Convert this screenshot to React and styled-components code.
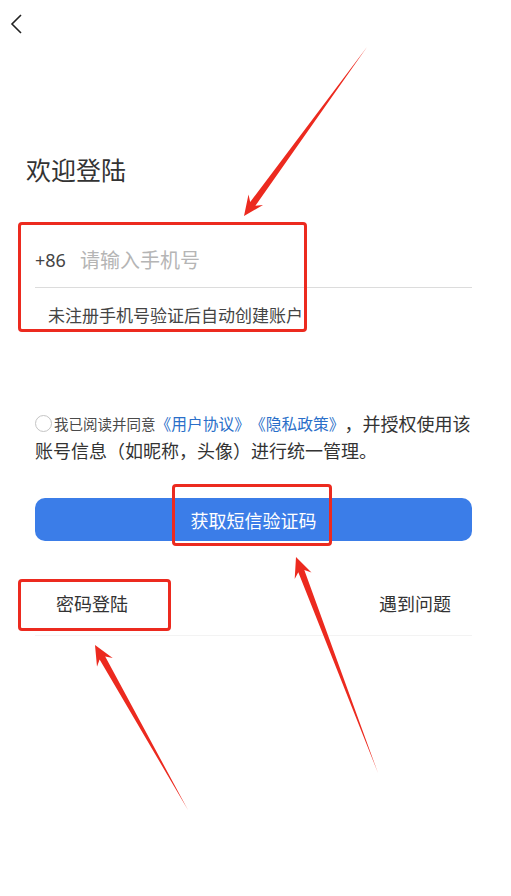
import React from 'react';
import styled, { createGlobalStyle } from 'styled-components';

const GlobalStyle = createGlobalStyle`
    html, body {
        margin: 0;
        padding: 0;
        background: #fff;
    }
    body {
        font-family: "Noto Sans CJK SC", "Noto Sans", sans-serif;
        color: #333;
        text-spacing-trim: space-all;
    }
`

const red = '#ec2a1f'

export const Page = styled.div`
    position: relative;
    width: 511px;
    height: 896px;
    overflow: hidden;
    background: #fff;
`

export const Header = styled.header`
    height: 48px;
    display: flex;
    align-items: center;
    padding-left: 8px;

    svg {
        display: block;
    }
`

export const Title = styled.h1`
    margin: 109px 0 0 26px;
    font-size: 25px;
    line-height: 25px;
    font-weight: 400;
    color: #333;
`

export const Content = styled.div`
    padding: 0 39px 0 35px;
`

export const PhoneRow = styled.div`
    margin-top: 50px;
    height: 55px;
    display: flex;
    align-items: center;
    gap: 14px;
    border-bottom: 1px solid #dcdcdc;
`

export const Prefix = styled.span`
    font-family: "Noto Sans", "Noto Sans CJK SC", sans-serif;
    font-size: 18px;
    color: #444;
`

export const Input = styled.span`
    font-size: 20px;
    color: #b5b5b5;
`

export const Hint = styled.p`
    margin: 17px 0 0 13px;
    font-size: 17px;
    line-height: 20px;
    color: #444;
`

export const Agreement = styled.div`
    margin-top: 85px;
    font-size: 18px;
    line-height: 27px;
    color: #333;
    white-space: nowrap;
`

export const Line = styled.div`
    display: flex;
    align-items: center;
`

export const Radio = styled.span`
    width: 15px;
    height: 15px;
    border: 1px solid #c4c4c4;
    border-radius: 50%;
    margin-right: 2px;
    flex: none;
`

export const Small = styled.span`
    font-size: 14.5px;
    color: #4a4a4a;
`

export const Link = styled.a`
    font-size: 15.75px;
    color: #2a6fc9;
    text-decoration: none;
`

export const Button = styled.button`
    display: block;
    width: 100%;
    height: 43px;
    margin-top: 34px;
    border: none;
    border-radius: 10px;
    background: #3b7de8;
    color: #fff;
    font-family: inherit;
    font-size: 18px;
    padding: 0;
`

export const BottomRow = styled.div`
    margin-top: 29px;
    height: 65px;
    display: flex;
    align-items: center;
    justify-content: space-between;
    padding: 0 21px;
    border-bottom: 1px solid #f3f3f3;
    font-size: 18px;
    color: #333;
`

export const Overlay = styled.div`
    position: absolute;
    inset: 0;
    pointer-events: none;

    svg {
        position: absolute;
        inset: 0;
    }
`

export const Mark = styled.div`
    position: absolute;
    left: ${p => p.$x}px;
    top: ${p => p.$y}px;
    width: ${p => p.$w}px;
    height: ${p => p.$h}px;
    box-sizing: border-box;
    border: 3px solid ${red};
    border-radius: 4px;
`

const arrowPoints = ([tx, ty], [px, py]) => {
    const len = Math.hypot(px - tx, py - ty)
    const dx = (px - tx) / len
    const dy = (py - ty) / len
    const nx = -dy
    const ny = dx
    const L = 20, notch = 5, hw = 9, sw = 3.2
    const bx = px - dx * L, by = py - dy * L
    const jx = px - dx * (L - notch), jy = py - dy * (L - notch)
    return [
        [tx, ty],
        [jx + nx * sw, jy + ny * sw],
        [bx + nx * hw, by + ny * hw],
        [px, py],
        [bx - nx * hw, by - ny * hw],
        [jx - nx * sw, jy - ny * sw],
    ].map(p => p.map(v => v.toFixed(1)).join(',')).join(' ')
}

const arrows = [
    [[367, 47], [244, 216]],
    [[378, 773], [296, 557]],
    [[188, 810], [95, 645]],
]

const App = () => (
    <>
        <GlobalStyle/>
        <Page>
            <Header>
                <svg width="20" height="24" viewBox="0 0 20 24">
                    <polyline points="13,3 4,12 13,21" fill="none" stroke="#222" strokeWidth="1.6"/>
                </svg>
            </Header>
            <Title>欢迎登陆</Title>
            <Content>
                <PhoneRow>
                    <Prefix>+86</Prefix>
                    <Input>请输入手机号</Input>
                </PhoneRow>
                <Hint>未注册手机号验证后自动创建账户</Hint>
                <Agreement>
                    <Line>
                        <Radio/>
                        <Small>我已阅读并同意</Small>
                        <Link>《用户协议》《隐私政策》</Link>
                        <span>，并授权使用该</span>
                    </Line>
                    <Line>账号信息（如昵称，头像）进行统一管理。</Line>
                </Agreement>
                <Button>获取短信验证码</Button>
                <BottomRow>
                    <span>密码登陆</span>
                    <span>遇到问题</span>
                </BottomRow>
            </Content>
            <Overlay>
                <Mark $x={18} $y={222} $w={289} $h={110}/>
                <Mark $x={172} $y={484} $w={160} $h={62}/>
                <Mark $x={18} $y={579} $w={153} $h={52}/>
                <svg width="511" height="896">
                    {arrows.map(([t, p], i) => (
                        <polygon key={i} points={arrowPoints(t, p)} fill={red}/>
                    ))}
                </svg>
            </Overlay>
        </Page>
    </>
);

export default App;
